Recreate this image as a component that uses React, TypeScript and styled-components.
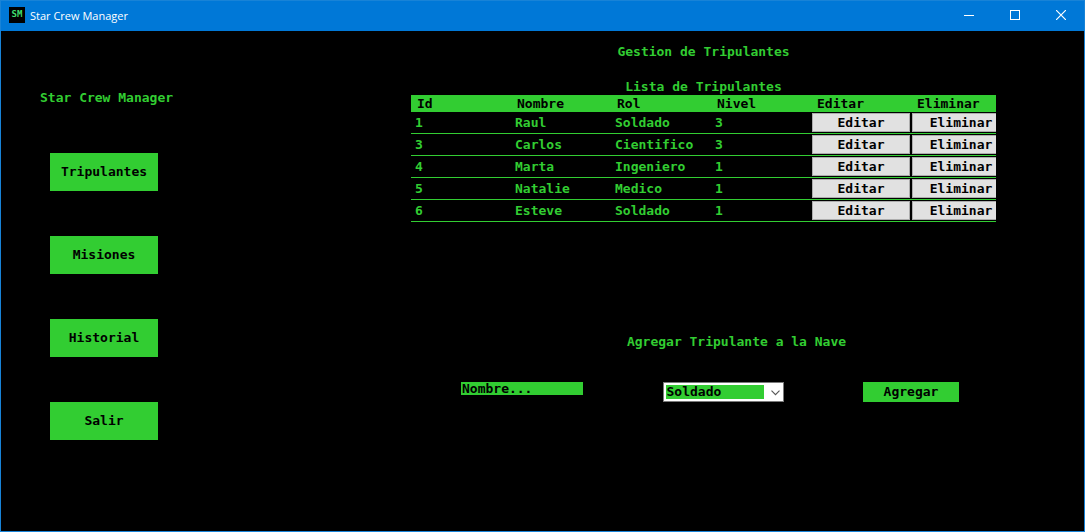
import React from 'react';
import styled, { createGlobalStyle } from 'styled-components';

const green = '#32cd32';
const blue = '#0078d7';

const GlobalStyle = createGlobalStyle`
  *, *::before, *::after { box-sizing: border-box; }
  body {
    margin: 0;
    background: #000;
    font: bold 13px/16px 'DejaVu Sans Mono', monospace;
    color: ${green};
  }
  button, input, select { font: inherit; color: #000; border-radius: 0; }
  h1, h2 { margin: 0; font: inherit; }
`;

const Window = styled.div`
  display: flex;
  flex-direction: column;
  min-height: 100vh;
  border: 1px solid #1883d7;
`;

const TitleBar = styled.header`
  display: flex;
  align-items: center;
  height: 30px;
  padding: 0 0 2px 8px;
  background: ${blue};
  color: #fff;
  font: 11px/16px 'Open Sans', sans-serif;
`;

const AppIcon = styled.span`
  width: 16px;
  height: 16px;
  margin-right: 5px;
  background: #000;
  color: #3fdc6c;
  font: bold 9px/15px 'DejaVu Sans Mono', monospace;
  text-align: center;
`;

const WindowTitle = styled.span`
  flex: 1;
  padding-top: 2px;
`;

const CaptionButton = styled.button`
  display: grid;
  place-items: center;
  width: 46px;
  height: 28px;
  padding: 0;
  border: 0;
  background: transparent;
`;

const Content = styled.div`
  display: flex;
  flex: 1;
`;

const Sidebar = styled.aside`
  width: 410px;
  flex-shrink: 0;
  padding: 59px 39px 0;
`;

const Nav = styled.nav`
  display: flex;
  flex-direction: column;
  gap: 45px;
  margin-top: 47px;
  padding-left: 10px;
`;

const NavButton = styled.button`
  width: 108px;
  height: 38px;
  padding: 0;
  border: 0;
  background: ${green};
`;

const Main = styled.main`
  flex: 1;
  min-width: 0;
  padding: 13px 88px 0 0;
`;

const PageTitle = styled.h1`
  text-align: center;
`;

const ListTitle = styled.h2`
  margin-top: 18px;
  line-height: 17px;
  text-align: center;
`;

const TableView = styled.div`
  overflow: hidden;
`;

const Table = styled.table`
  width: 600px;
  table-layout: fixed;
  border-collapse: separate;
  border-spacing: 0;
`;

const HeadCell = styled.th`
  height: 17px;
  padding: 0 6px;
  background: ${green};
  color: #000;
  line-height: 17px;
  text-align: left;
`;

const Cell = styled.td`
  height: 22px;
  padding: 0 4px;
  border-bottom: 1px solid ${green};
`;

const ActionCell = styled(Cell)`
  padding: 1px;
`;

const RowButton = styled.button`
  display: block;
  width: 100%;
  height: 19px;
  padding: 0;
  border: 1px solid #adadad;
  background: #e1e1e1;
  line-height: 17px;
`;

const AddSection = styled.section`
  margin-top: 112px;
`;

const AddTitle = styled.h2`
  padding-left: 66px;
  text-align: center;
`;

const AddForm = styled.form`
  display: flex;
  align-items: flex-start;
  justify-content: space-between;
  margin-top: 32px;
  padding: 0 37px 0 50px;
`;

const NameInput = styled.input`
  width: 122px;
  height: 13px;
  padding: 0 1px;
  border: 0;
  background: ${green};
  line-height: 13px;
  &::placeholder { color: #000; opacity: 1; }
`;

const SelectBox = styled.div`
  position: relative;
  width: 121px;
  svg { position: absolute; right: 4px; top: 8px; pointer-events: none; }
`;

const RoleSelect = styled.select`
  display: block;
  width: 100%;
  height: 20px;
  padding: 0 20px 0 3px;
  border: 1px solid #7a7a7a;
  appearance: none;
  background: linear-gradient(${green}, ${green}) 2px 2px / calc(100% - 21px) 14px no-repeat #fff;
  line-height: 16px;
`;

const AddButton = styled.button`
  width: 96px;
  height: 20px;
  padding: 0;
  border: 0;
  background: ${green};
`;

const sections = ['Tripulantes', 'Misiones', 'Historial', 'Salir'];
const columns = ['Id', 'Nombre', 'Rol', 'Nivel', 'Editar', 'Eliminar'];
const crew = [
  { id: 1, name: 'Raul', role: 'Soldado', level: 3 },
  { id: 3, name: 'Carlos', role: 'Cientifico', level: 3 },
  { id: 4, name: 'Marta', role: 'Ingeniero', level: 1 },
  { id: 5, name: 'Natalie', role: 'Medico', level: 1 },
  { id: 6, name: 'Esteve', role: 'Soldado', level: 1 },
];

export default function App() {
  return (
    <Window>
      <GlobalStyle />
      <TitleBar>
        <AppIcon>SM</AppIcon>
        <WindowTitle>Star Crew Manager</WindowTitle>
        <CaptionButton aria-label="Minimizar">
          <svg width="10" height="10" shapeRendering="crispEdges"><path d="M0 5.5h10" stroke="#fff" /></svg>
        </CaptionButton>
        <CaptionButton aria-label="Maximizar">
          <svg width="10" height="10" shapeRendering="crispEdges"><path d="M.5.5h9v9h-9z" fill="none" stroke="#fff" /></svg>
        </CaptionButton>
        <CaptionButton aria-label="Cerrar">
          <svg width="10" height="10"><path d="M0 0l10 10M10 0L0 10" stroke="#fff" strokeWidth="1.2" /></svg>
        </CaptionButton>
      </TitleBar>
      <Content>
        <Sidebar>
          <div>Star Crew Manager</div>
          <Nav>
            {sections.map((s) => <NavButton key={s} type="button">{s}</NavButton>)}
          </Nav>
        </Sidebar>
        <Main>
          <PageTitle>Gestion de Tripulantes</PageTitle>
          <ListTitle id="lista">Lista de Tripulantes</ListTitle>
          <TableView>
            <Table aria-labelledby="lista">
              <thead>
                <tr>{columns.map((c) => <HeadCell key={c} scope="col">{c}</HeadCell>)}</tr>
              </thead>
              <tbody>
                {crew.map((m) => (
                  <tr key={m.id}>
                    <Cell>{m.id}</Cell>
                    <Cell>{m.name}</Cell>
                    <Cell>{m.role}</Cell>
                    <Cell>{m.level}</Cell>
                    <ActionCell><RowButton type="button">Editar</RowButton></ActionCell>
                    <ActionCell><RowButton type="button">Eliminar</RowButton></ActionCell>
                  </tr>
                ))}
              </tbody>
            </Table>
          </TableView>
          <AddSection>
            <AddTitle>Agregar Tripulante a la Nave</AddTitle>
            <AddForm>
              <NameInput aria-label="Nombre" placeholder="Nombre..." />
              <SelectBox>
                <RoleSelect aria-label="Rol" defaultValue="Soldado">
                  <option>Soldado</option>
                  <option>Cientifico</option>
                  <option>Ingeniero</option>
                  <option>Medico</option>
                </RoleSelect>
                <svg width="9" height="6"><path d="M.5.7l4 4 4-4" fill="none" stroke="#555" strokeWidth="1.1" /></svg>
              </SelectBox>
              <AddButton type="button">Agregar</AddButton>
            </AddForm>
          </AddSection>
        </Main>
      </Content>
    </Window>
  );
}
